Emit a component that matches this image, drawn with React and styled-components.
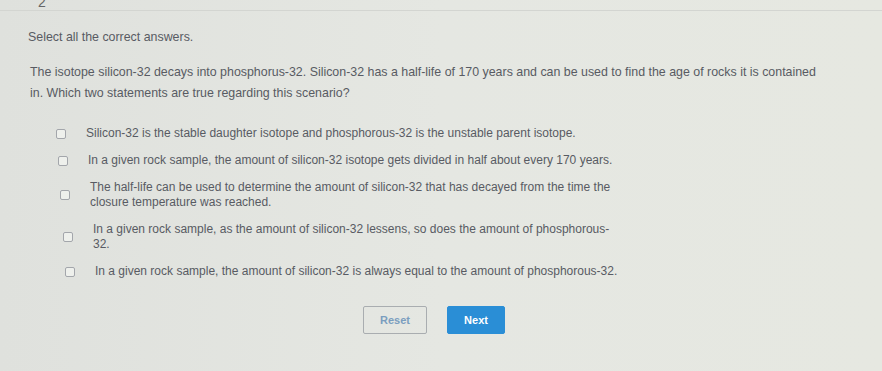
import React from 'react';
import styled, { createGlobalStyle } from 'styled-components';

const GlobalStyle = createGlobalStyle`
  html, body { margin: 0; padding: 0; }
  body {
    background: #e2e4df;
    font-family: "Liberation Sans", Arial, sans-serif;
    color: #5a5c62;
  }
`;

const Page = styled.div`
  width: 882px;
  height: 371px;
  overflow: hidden;
  background: linear-gradient(90deg, #dfe1dd 0%, #e5e7e2 50%, #e6e8e1 100%);
`;

const TopBar = styled.div`
  height: 10px;
  overflow: hidden;
  border-bottom: 1px solid #d3d5d1;
  padding-left: 38px;
  font-size: 14px;
  line-height: 4px;
  color: #666;
`;

const Content = styled.div`
  padding: 19px 0 0 28px;
`;

const Instruction = styled.p`
  margin: 0;
  font-size: 12.4px;
  line-height: 14px;
  color: #585b63;
`;

const Question = styled.p`
  margin: 18px 0 0 2px;
  width: 800px;
  font-size: 12.4px;
  line-height: 21px;
  color: #585b63;
`;

const Options = styled.div`
  margin-top: 22px;
  display: flex;
  flex-direction: column;
  gap: 12px;
`;

const Option = styled.label`
  display: flex;
  align-items: center;
  gap: 20px;
  padding-left: ${p => p.$shift}px;
  min-height: 15px;
`;

const Box = styled.span`
  flex: none;
  width: 8px;
  height: 8px;
  border: 1px solid #a3a6ab;
  border-radius: 2px;
  background: #eef0ec;
`;

const OptionText = styled.span`
  width: 530px;
  font-size: 12px;
  line-height: 15px;
  color: #585b63;
`;

const Buttons = styled.div`
  display: flex;
  gap: 20px;
  margin: 27px 0 0 335px;
`;

const Button = styled.button`
  width: ${p => p.$w}px;
  height: 28px;
  font-family: "Liberation Sans", Arial, sans-serif;
  font-size: 11px;
  font-weight: 700;
  border-radius: 2px;
  border: 1px solid ${p => (p.$primary ? '#2a8ed6' : '#a9adb0')};
  background: ${p => (p.$primary ? '#2a8ed6' : 'transparent')};
  color: ${p => (p.$primary ? '#ffffff' : '#7b9ebf')};
`;

const options = [
  { shift: 28, text: 'Silicon-32 is the stable daughter isotope and phosphorous-32 is the unstable parent isotope.' },
  { shift: 30, text: 'In a given rock sample, the amount of silicon-32 isotope gets divided in half about every 170 years.' },
  { shift: 32, text: 'The half-life can be used to determine the amount of silicon-32 that has decayed from the time the closure temperature was reached.' },
  { shift: 35, text: 'In a given rock sample, as the amount of silicon-32 lessens, so does the amount of phosphorous-32.' },
  { shift: 37, text: 'In a given rock sample, the amount of silicon-32 is always equal to the amount of phosphorous-32.' },
];

export default function App() {
  return (
    <Page>
      <GlobalStyle />
      <TopBar>2</TopBar>
      <Content>
        <Instruction>Select all the correct answers.</Instruction>
        <Question>
          The isotope silicon-32 decays into phosphorus-32. Silicon-32 has a half-life of 170 years and can be used to find the age of rocks it is contained in. Which two statements are true regarding this scenario?
        </Question>
        <Options>
          {options.map((o, i) => (
            <Option key={i} $shift={o.shift}>
              <Box />
              <OptionText>{o.text}</OptionText>
            </Option>
          ))}
        </Options>
        <Buttons>
          <Button $w={64}>Reset</Button>
          <Button $w={58} $primary>Next</Button>
        </Buttons>
      </Content>
    </Page>
  );
}
